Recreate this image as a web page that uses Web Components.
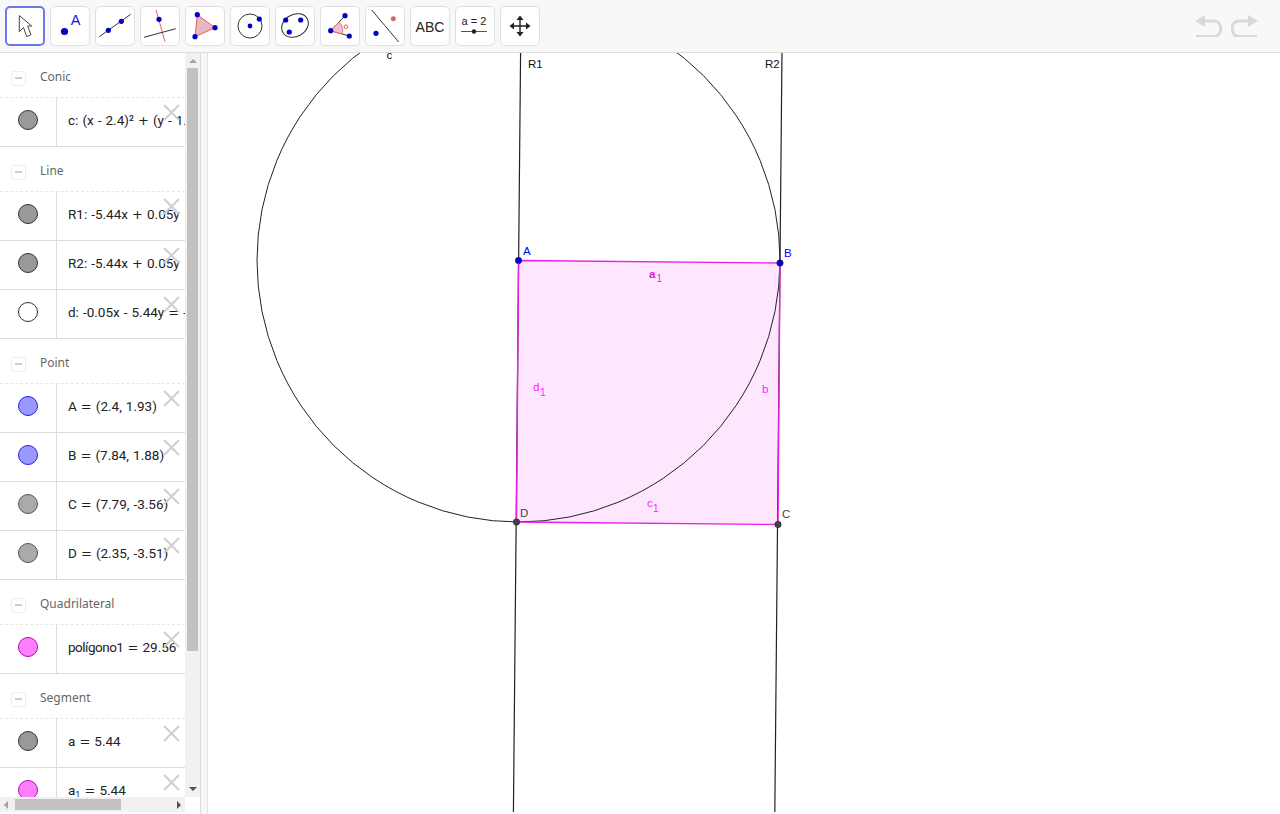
<!DOCTYPE html>
<html><head><meta charset="utf-8">
<style>
html,body{margin:0;padding:0;height:100%;background:#fff;overflow:hidden}
body{font-family:"Noto Sans","Open Sans",sans-serif}
sub{font-size:9px;line-height:0;vertical-align:-3px}
.op{font:13px "DejaVu Sans",sans-serif;margin:0}
.tight{letter-spacing:-.5px}
</style></head>
<body>
<template id="t-app"><style>
:host{display:grid;grid-template-rows:53px 761px;grid-template-columns:200px 8px 1fr;width:1280px;height:814px;overflow:hidden}
.div{background:#f7f7f7;border-left:1px solid #dcdcdc;border-right:1px solid #e4e4e4;box-sizing:border-box;width:8px}
.top{grid-column:1/4;display:block}
</style><div class="top"><slot name="top"></slot></div><slot name="left"></slot><div class="div"></div><slot name="main"></slot></template>

<template id="t-toolbar"><style>
:host{display:flex;align-items:flex-start;box-sizing:border-box;height:53px;background:#f8f8f8;border-bottom:1px solid #dcdcdc;padding:6px 21px 0 5px;gap:5px}
.sp{flex:1}
.undo{display:flex;margin-top:3px}
</style><slot></slot><div class="sp"></div><div class="undo"><slot name="undo"></slot></div></template>

<template id="t-tool"><style>
:host{display:block;box-sizing:border-box;width:40px;height:40px;background:#fff;border:1px solid #e0e0e0;border-radius:5px;padding:3px}
:host([selected]){border:2px solid #6a78f0;padding:2px}
</style><slot></slot></template>

<template id="t-view"><style>
:host{display:grid;grid-template-columns:185px 15px;grid-template-rows:744px 15px;width:200px;height:761px;overflow:hidden;background:#fff}
.list{overflow:hidden;min-width:0}
.v{background:#f1f1f1;display:flex;flex-direction:column;align-items:center;position:relative}
.up,.dn{width:0;height:0;border-left:4px solid transparent;border-right:4px solid transparent}
.up{border-bottom:4px solid #a3a3a3;margin-top:6px}
.th{width:11px;height:583px;background:#c1c1c1;margin-top:5px}
.dn{border-top:4px solid #505050;margin-top:auto;margin-bottom:6px}
.h{background:#f1f1f1;display:flex;align-items:center;padding:0 4px;height:15px;box-sizing:border-box}
.l,.r{width:0;height:0;border-top:4px solid transparent;border-bottom:4px solid transparent}
.l{border-right:4px solid #a3a3a3}
.r{border-left:4px solid #505050;margin-left:auto}
.hth{width:106px;height:11px;background:#c1c1c1;margin-left:7px}
</style><div class="list"><slot></slot></div><div class="v"><div class="up"></div><div class="th"></div><div class="dn"></div></div><div class="h"><div class="l"></div><div class="hth"></div><div class="r"></div></div><div></div></template>

<template id="t-head"><style>
:host{display:flex;align-items:center;box-sizing:border-box;height:45px;padding:3px 0 0 11px;border-bottom:1px dashed #e6e6e6;font:12px "Noto Sans","Open Sans",sans-serif;color:#666;white-space:nowrap}
.b{box-sizing:border-box;width:15px;height:15px;border:1px solid #eee;border-radius:3px;display:flex;align-items:center;justify-content:center;margin-right:14px;margin-top:3px}
.b i{display:block;width:7px;height:1px;background:#c8c8c8;border-top:1px solid #d4d4d4}
</style><div class="b"><i></i></div><slot></slot></template>

<template id="t-row"><style>
:host{display:flex;position:relative;box-sizing:border-box;height:49px;border-bottom:1px solid #dcdcdc;width:185px;overflow:hidden;font:13.5px Roboto,"Noto Sans",sans-serif;word-spacing:.7px;color:#222}
.m{flex:none;box-sizing:border-box;width:57px;border-right:1px solid #dcdcdc;display:flex;align-items:center;justify-content:center;padding-bottom:4px}
.m i{display:block;box-sizing:border-box;width:20px;height:20px;border-radius:50%;border:1px solid var(--bd,#333);background:var(--fill,#999)}
.t{padding:0 0 4px 11px;display:flex;align-items:center;white-space:nowrap}
svg{position:absolute;left:163px;top:6px}
</style><div class="m"><i></i></div><div class="t"><span><slot></slot></span></div>
<svg width="17" height="17" viewBox="0 0 17 17"><path d="M1 1L16 16M16 1L1 16" stroke="#cfcfcf" stroke-width="2" fill="none"/></svg></template>

<template id="t-canvas"><style>
:host{display:block;overflow:hidden;background:#fff;height:759px;position:relative}
svg{display:block}
text{font-family:"Liberation Sans",Arial,sans-serif;font-size:11.5px}
</style><svg width="1072" height="759" viewBox="208 53 1072 759">
<polygon points="518.5,260.5 780,263 778,524.5 516.5,522" fill="#ff40ff" fill-opacity=".13" stroke="none"/>
<circle cx="518.5" cy="260.5" r="261.5" fill="none" stroke="#222" stroke-width="1"/>
<line x1="520.7" y1="40" x2="513.4" y2="814" stroke="#222" stroke-width="1.2"/>
<line x1="782.1" y1="40" x2="774.8" y2="814" stroke="#222" stroke-width="1.2"/>
<polygon points="518.5,260.5 780,263 778,524.5 516.5,522" fill="none" stroke="#e820e8" stroke-width="1.4"/>
<circle cx="518.5" cy="260.5" r="3.200" fill="#0000e0" stroke="#222" stroke-width=".6"/>
<circle cx="780" cy="263" r="3.200" fill="#0000e0" stroke="#222" stroke-width=".6"/>
<circle cx="778" cy="524.5" r="3.200" fill="#444" stroke="#222" stroke-width=".6"/>
<circle cx="516.5" cy="522" r="3.200" fill="#444" stroke="#222" stroke-width=".6"/>
<text x="386.500" y="59" fill="#111">c</text>
<text x="528" y="68" fill="#111">R1</text>
<text x="765" y="68" fill="#111">R2</text>
<text x="523" y="255" fill="#0000ff">A</text>
<text x="784" y="257" fill="#0000ff">B</text>
<text x="782" y="518" fill="#444">C</text>
<text x="520" y="517" fill="#444">D</text>
<text x="649" y="278" fill="#d818d8" font-weight="bold">a</text><text x="656.500" y="282" fill="#e030e0" style="font-size:10px">1</text>
<text x="533" y="391" fill="#ff20ff">d</text><text x="540" y="396" fill="#ff20ff" style="font-size:10px">1</text>
<text x="762" y="393" fill="#ff20ff">b</text>
<text x="647" y="507" fill="#ff20ff">c</text><text x="653" y="512" fill="#ff20ff" style="font-size:10px">1</text>
</svg></template>

<geo-app>
<geo-toolbar slot="top">
<tool-button selected><svg width="32" height="32" viewBox="0 6 32 32"><path d="M10.300 11.600V27.700L14.500 23.500L17.700 32.500L22 30.800L18.700 22H22.700Z" fill="#fff" stroke="#444" stroke-width="1"/></svg></tool-button>
<tool-button><svg width="32" height="32" viewBox="0 6 32 32"><circle cx="10.500" cy="27.500" r="3.600" fill="#0000c8"/><text x="16.700" y="21" fill="#1414e6" style="font:14.500px 'Liberation Sans',sans-serif">A</text></svg></tool-button>
<tool-button><svg width="32" height="32" viewBox="0 6 32 32"><path d="M0.300 32.700L31.700 10.300" stroke="#333" stroke-width="1"/><circle cx="9.300" cy="26.300" r="2.600" fill="#0000c8"/><circle cx="22.300" cy="17.300" r="2.600" fill="#0000c8"/></svg></tool-button>
<tool-button><svg width="32" height="32" viewBox="0 6 32 32"><path d="M12 6L21 37.700" stroke="#e86060" stroke-width="1"/><path d="M0 33.300L31.700 24.700" stroke="#333" stroke-width="1"/><circle cx="15" cy="15.300" r="2.600" fill="#0000c8"/></svg></tool-button>
<tool-button><svg width="32" height="32" viewBox="0 6 32 32"><polygon points="8.300,10.700 26,23.700 6,32.700" fill="#e8b8c0" stroke="#e06060" stroke-width="1"/><circle cx="8.300" cy="10.700" r="2.600" fill="#0000c8"/><circle cx="26" cy="23.700" r="2.600" fill="#0000c8"/><circle cx="6" cy="32.700" r="2.600" fill="#0000c8"/></svg></tool-button>
<tool-button><svg width="32" height="32" viewBox="0 6 32 32"><circle cx="16" cy="22" r="12" fill="none" stroke="#333" stroke-width="1"/><circle cx="16" cy="22" r="2.400" fill="#0000c8"/><circle cx="25.300" cy="15" r="2.600" fill="#0000c8"/></svg></tool-button>
<tool-button><svg width="32" height="32" viewBox="0 6 32 32"><ellipse cx="16" cy="21.500" rx="14" ry="11" transform="rotate(-30 16 21.500)" fill="none" stroke="#333" stroke-width="1"/><circle cx="6.700" cy="16" r="2.600" fill="#0000c8"/><circle cx="21.700" cy="16" r="2.600" fill="#0000c8"/><circle cx="10.300" cy="28" r="2.600" fill="#0000c8"/></svg></tool-button>
<tool-button><svg width="32" height="32" viewBox="0 6 32 32"><path d="M6.700 26.700L21 11.700M6.700 26.700L25.300 32" stroke="#333" stroke-width="1" fill="none"/><path d="M6.700 26.700L15 18A11 11 0 0 1 18 30Z" fill="#eec0c8" stroke="#e06060" stroke-width=".8"/><circle cx="6.700" cy="26.700" r="2.600" fill="#0000c8"/><circle cx="21" cy="11.700" r="2.600" fill="#0000c8"/><circle cx="25.300" cy="32" r="2.600" fill="#0000c8"/><circle cx="22" cy="22.700" r="1.800" fill="none" stroke="#e06060" stroke-width="1"/></svg></tool-button>
<tool-button><svg width="32" height="32" viewBox="0 6 32 32"><path d="M2.700 6L29.700 38" stroke="#333" stroke-width="1"/><circle cx="7" cy="29.300" r="2.600" fill="#0000c8"/><circle cx="24.300" cy="14.700" r="2.300" fill="#e86050" stroke="#777" stroke-width=".4"/></svg></tool-button>
<tool-button><svg width="32" height="32" viewBox="0 6 32 32"><text x="16" y="27.500" text-anchor="middle" fill="#222" style="font:14px 'Liberation Sans',sans-serif">ABC</text></svg></tool-button>
<tool-button><svg width="32" height="32" viewBox="0 6 32 32"><text x="15" y="21" text-anchor="middle" fill="#222" style="font:11px 'Liberation Sans',sans-serif">a = 2</text><path d="M2 27.500H28" stroke="#555" stroke-width="1"/><circle cx="15" cy="27.500" r="2.200" fill="#222"/></svg></tool-button>
<tool-button><svg width="32" height="32" viewBox="0 6 32 32"><path d="M8 22H24M16 14V30" stroke="#222" stroke-width="1.400"/><path d="M16 11.500L19.500 16H12.500ZM16 32.500L12.500 28H19.500ZM5.500 22L10 18.500V25.500ZM26.500 22L22 25.500V18.500Z" fill="#222"/></svg></tool-button>
<svg slot="undo" width="28" height="28" viewBox="0 0 28 28" style="margin-right:9px"><path d="M10 12H20C29 12 29 27.500 20 27.500H2" fill="none" stroke="#d9d9d9" stroke-width="3"/><path d="M1 12L11 6V18Z" fill="#d9d9d9"/></svg>
<svg slot="undo" width="28" height="28" viewBox="0 0 28 28"><path d="M18 12H8C-1 12 -1 27.500 8 27.500H26" fill="none" stroke="#d9d9d9" stroke-width="3"/><path d="M27 12L17 6V18Z" fill="#d9d9d9"/></svg>
</geo-toolbar>
<algebra-view slot="left">
<algebra-group>Conic</algebra-group>
<algebra-row>c: (x - 2.4)² <b class="op">+</b> (y - 1.93)² <b class="op">=</b> 68.38</algebra-row>
<algebra-group>Line</algebra-group>
<algebra-row>R1: -5.44x <b class="op">+</b> 0.05y <b class="op">=</b> -12.95</algebra-row>
<algebra-row>R2: -5.44x <b class="op">+</b> 0.05y <b class="op">=</b> -42.56</algebra-row>
<algebra-row hollow>d: -0.05x - 5.44y <b class="op">=</b> -10.63</algebra-row>
<algebra-group>Point</algebra-group>
<algebra-row kind="blue">A <b class="op">=</b> (2.4, 1.93)</algebra-row>
<algebra-row kind="blue">B <b class="op">=</b> (7.84, 1.88)</algebra-row>
<algebra-row kind="light">C <b class="op">=</b> (7.79, -3.56)</algebra-row>
<algebra-row kind="light">D <b class="op">=</b> (2.35, -3.51)</algebra-row>
<algebra-group>Quadrilateral</algebra-group>
<algebra-row kind="pink"><span class="tight">polígono1</span> <b class="op">=</b> 29.56</algebra-row>
<algebra-group>Segment</algebra-group>
<algebra-row>a <b class="op">=</b> 5.44</algebra-row>
<algebra-row kind="pink">a<sub>1</sub> <b class="op">=</b> 5.44</algebra-row>
</algebra-view>
<geo-canvas slot="main"></geo-canvas>
</geo-app>
<script>
function def(tag,id,after){customElements.define(tag,class extends HTMLElement{constructor(){super();this.attachShadow({mode:'open'}).appendChild(document.getElementById(id).content.cloneNode(true));}connectedCallback(){after&&after(this)}})}
def('geo-app','t-app');def('geo-toolbar','t-toolbar');def('tool-button','t-tool');def('algebra-view','t-view');def('algebra-group','t-head');def('geo-canvas','t-canvas');
const K={blue:['#9999ff','#2222e0'],light:['#aaaaaa','#555'],pink:['#ff80ff','#c000c0']};
def('algebra-row','t-row',e=>{const k=K[e.getAttribute('kind')];if(k){e.style.setProperty('--fill',k[0]);e.style.setProperty('--bd',k[1])}if(e.hasAttribute('hollow'))e.style.setProperty('--fill','#fff')});
</script>
</body></html>
